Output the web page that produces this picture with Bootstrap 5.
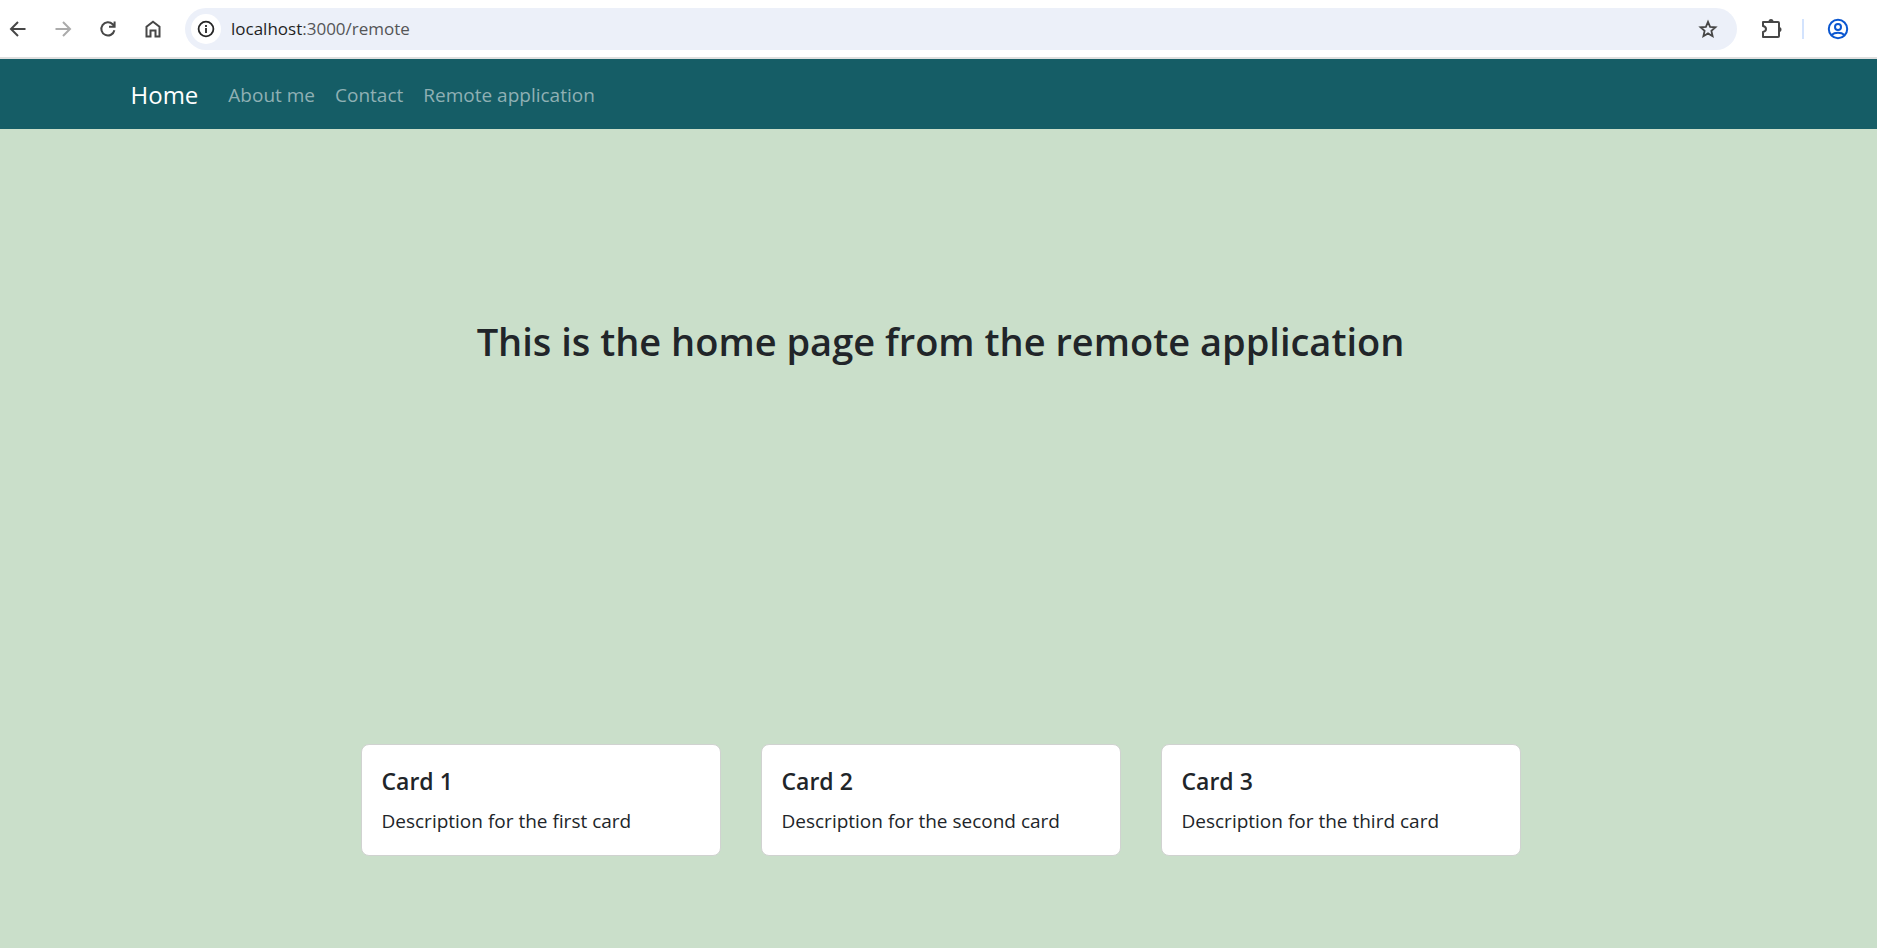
<!DOCTYPE html>
<html lang="en">
<head>
<meta charset="utf-8">
<meta name="viewport" content="width=device-width, initial-scale=1">
<title>Remote application</title>
<link href="https://cdn.jsdelivr.net/npm/bootstrap@5.3.0/dist/css/bootstrap.min.css" rel="stylesheet">
<style>
  html { font-size: 20px; }
  body { font-family: "Open Sans", "Noto Sans", sans-serif; font-size: 19px; line-height: 30px; background: #cadfca; }
  .toolbar { padding: 8px 22px 7px 0; background: #fff; border-bottom: 2px solid #dfdfdf; }
  .tool { width: 35px; height: 35px; color: #474747; }
  .tool:disabled { color: #ababab; border: 0; opacity: 1; }
  .tool svg, .site-info svg { width: 24px; height: 24px; flex: none; }
  .profile { color: #0b57d0; }
  .nav-tools { gap: 10px; }
  .address { margin: 0 16px 0 15px; height: 42px; padding: 0 12px 0 6px; background: #ecf0f9; }
  .site-info { width: 30px; height: 30px; background: #fff; color: #262626; }
  .url { font-size: 17px; line-height: 24px; margin-left: 10px; color: #1f1f1f; }
  .url span { color: #545557; }
  .tool-rule { width: 2px; height: 20px; margin: 0 16px 0 14px; background: #d3e3fd; }
  .site-nav { height: 70px; padding: 12px 0 10px 4px; background: #155d66; }
  .site-nav .container { max-width: 1650px; }
  .site-nav .navbar-brand { font-size: 24px; }
  .site-nav .nav-link { --bs-nav-link-color: #8fb0b4; color: #8fb0b4; }
  main { padding-left: 4px; }
  .hero-title { margin: 188px 0 379px; font-size: 38px; line-height: 48px; font-weight: 600; }
  .card-set { max-width: 1160px; gap: 40px; }
  .card-set .card { flex: 1; border-color: #d0d2d0; border-radius: 8px; }
  .card-set .card-body { padding: 21px 20px 19px; }
  .card-set .card-title { font-size: 23px; line-height: 30px; font-weight: 600; }
</style>
</head>
<body>
<header class="toolbar d-flex align-items-center">
  <div class="nav-tools d-flex">
    <button type="button" class="tool btn p-0 d-flex align-items-center justify-content-center" aria-label="Back"><svg viewBox="0 0 24 24" fill="none" stroke="currentColor" stroke-width="2"><path d="M19.500 12H5.500M12 5l-7 7 7 7"/></svg></button>
    <button type="button" class="tool btn p-0 d-flex align-items-center justify-content-center" aria-label="Forward" disabled><svg viewBox="0 0 24 24" fill="none" stroke="currentColor" stroke-width="2"><path d="M4.500 12h14M12 5l7 7-7 7"/></svg></button>
    <button type="button" class="tool btn p-0 d-flex align-items-center justify-content-center" aria-label="Reload"><svg viewBox="0 0 24 24" fill="none" stroke="currentColor" stroke-width="2"><path d="M18.400 13.300A6.600 6.600 0 1 1 16.700 7.300L18.600 9.300M18.600 4.500v5.300h-5.600"/></svg></button>
    <button type="button" class="tool btn p-0 d-flex align-items-center justify-content-center" aria-label="Home page"><svg viewBox="0 0 24 24" fill="none" stroke="currentColor" stroke-width="2"><path d="M5.500 19.500V9.700L12 4.800l6.500 4.900v9.800h-4v-6h-5v6z"/></svg></button>
  </div>
  <div class="address rounded-pill flex-grow-1 d-flex align-items-center">
    <button type="button" class="site-info btn rounded-circle p-0 d-flex align-items-center justify-content-center" aria-label="Site information"><svg viewBox="0 0 24 24" fill="none" stroke="currentColor" stroke-width="1.800"><circle cx="12" cy="12" r="7.400"/><path d="M12 11v5M12 8v2"/></svg></button>
    <div class="url flex-grow-1">localhost<span>:3000/remote</span></div>
    <button type="button" class="tool btn p-0 d-flex align-items-center justify-content-center" aria-label="Bookmark"><svg viewBox="0 0 24 24" fill="none" stroke="currentColor" stroke-width="1.800"><path d="M12 4.800l2.100 5 5.400.5-4.100 3.600 1.200 5.300L12 16.400l-4.600 2.800 1.200-5.300-4.100-3.600 5.400-.5z"/></svg></button>
  </div>
  <button type="button" class="tool btn p-0 d-flex align-items-center justify-content-center" aria-label="Extensions"><svg viewBox="0 0 24 24" fill="none" stroke="currentColor" stroke-width="2"><path d="M4 5h15a1 1 0 0 1 1 1v13a1 1 0 0 1-1 1H4v-5c4-1 4-5 0-6z" stroke-linejoin="round"/><path d="M9.500 4.500a2.500 2.500 0 0 1 5 0zM20 10a2.500 2.500 0 0 1 0 5z" fill="currentColor" stroke="none"/></svg></button>
  <span class="tool-rule"></span>
  <button type="button" class="tool profile btn p-0 d-flex align-items-center justify-content-center" aria-label="Profile"><svg viewBox="0 0 24 24" fill="none" stroke="currentColor" stroke-width="2"><circle cx="12" cy="12" r="9.200"/><circle cx="12" cy="10" r="3"/><path d="M5.500 18c3.500-3 9.500-3 13 0"/></svg></button>
</header>

<nav class="site-nav navbar navbar-expand navbar-dark" aria-label="Main">
  <div class="container">
    <a class="navbar-brand" href="#">Home</a>
    <div class="navbar-nav me-auto">
      <a class="nav-link" href="#">About me</a>
      <a class="nav-link" href="#">Contact</a>
      <a class="nav-link" href="#">Remote application</a>
    </div>
  </div>
</nav>

<main>
  <h1 class="hero-title text-center">This is the home page from the remote application</h1>
  <div class="card-set d-flex mx-auto">
    <div class="card"><div class="card-body">
      <h5 class="card-title">Card 1</h5>
      <p class="card-text">Description for the first card</p>
    </div></div>
    <div class="card"><div class="card-body">
      <h5 class="card-title">Card 2</h5>
      <p class="card-text">Description for the second card</p>
    </div></div>
    <div class="card"><div class="card-body">
      <h5 class="card-title">Card 3</h5>
      <p class="card-text">Description for the third card</p>
    </div></div>
  </div>
</main>
<script src="https://cdn.jsdelivr.net/npm/bootstrap@5.3.0/dist/js/bootstrap.bundle.min.js"></script>
</body>
</html>
